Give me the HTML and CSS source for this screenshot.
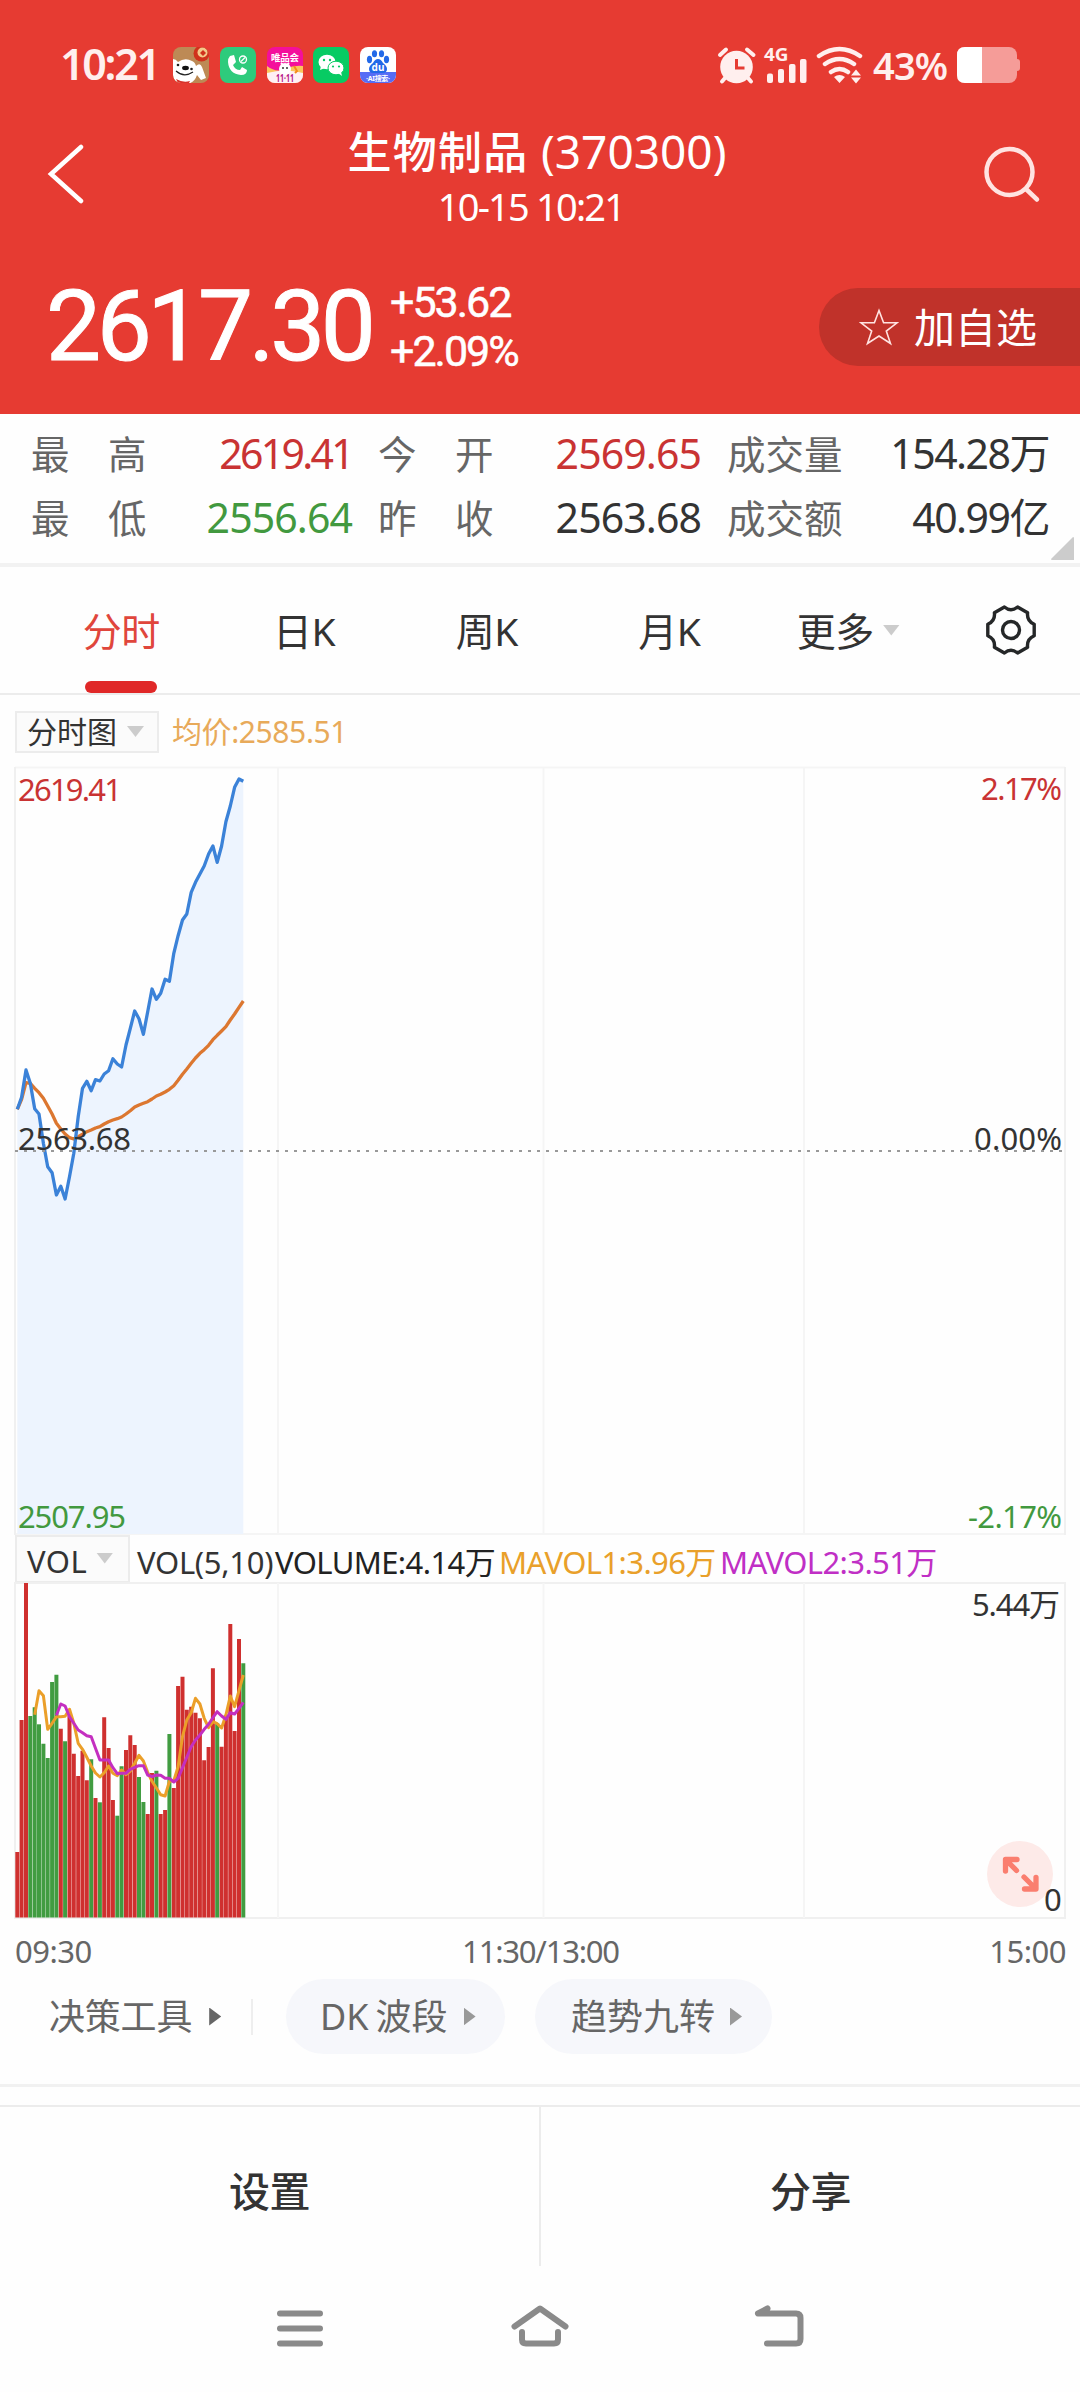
FILE: index.html
```html
<!DOCTYPE html>
<html lang="zh-CN">
<head>
<meta charset="utf-8">
<title>生物制品 (370300)</title>
<link rel="stylesheet" href="styles.css">
</head>
<body>
<header class="top">
  <div class="status">
    <span class="clock">10:21</span>
    <div class="apps">
      <svg class="app" viewBox="0 0 36 36">
        <defs><clipPath id="tile"><rect width="36" height="36" rx="8"/></clipPath></defs>
        <g clip-path="url(#tile)">
          <rect width="36" height="36" fill="#bd8a55"/>
          <path d="M0 12q3 0 5 3q7-5 14-1q3 1 4 5q4-4 6 1l4 11-5 2-4-5q-3 9-12 9Q0 36 0 28z" fill="#fff"/>
          <path d="M3 24q8 7 17 1" fill="none" stroke="#222" stroke-width="1.200"/>
          <circle cx="5" cy="18" r="1.300" fill="#222"/><circle cx="18.500" cy="22" r="1.300" fill="#222"/>
          <ellipse cx="12.500" cy="21" rx="3.400" ry="2.200" fill="#111"/>
          <path d="M3 32q7 4 14 2l-1 2H5z" fill="#d8322a"/>
          <circle cx="28.500" cy="6.500" r="8" fill="#d0321c"/><circle cx="29.500" cy="5.500" r="5" fill="#f4c98a"/>
          <path d="M27 6l3-3 3 3-3 3z" fill="#d0321c"/>
        </g>
      </svg>
      <svg class="app" viewBox="0 0 36 36">
        <rect width="36" height="36" rx="8" fill="#2ecb7c"/>
        <path d="M10 9l4-1 2 7-3 3q2 5 7 5l2-3 5 3q0 5-6 5Q9 27 8 15q0-4 2-6z" fill="#fff"/>
        <circle cx="23" cy="12.500" r="3.500" fill="none" stroke="#fff" stroke-width="1.300"/><path d="M21 14.500l4-4" stroke="#fff" stroke-width="1.200"/>
      </svg>
      <svg class="app" viewBox="0 0 36 36">
        <g clip-path="url(#tile)">
          <rect width="36" height="36" fill="#f40f9c"/>
          <path d="M0 19q9 7 18 3t18-3v17H0z" fill="#fbc45d"/><path d="M0 26q18-5 36 0v10H0z" fill="#fff0f4"/>
          <circle cx="18" cy="22" r="6" fill="#fff"/><circle cx="16" cy="21" r="1" fill="#333"/><circle cx="20" cy="21" r="1" fill="#333"/>
          <path d="M14 16l2 2M22 16l-2 2" stroke="#fff" stroke-width="2"/>
          <path d="M27 19l3 5-2 2" stroke="#f58a1c" stroke-width="2" fill="none"/>
        </g>
        <text class="t-brand" x="18" y="13.500" text-anchor="middle" textLength="28">唯品会</text>
        <text class="t-sale" x="18" y="34.500" text-anchor="middle" textLength="18" lengthAdjust="spacingAndGlyphs">11·11</text>
      </svg>
      <svg class="app" viewBox="0 0 36 36">
        <rect width="36" height="36" rx="8" fill="#07cb63"/>
        <ellipse cx="14" cy="15" rx="8.500" ry="7.300" fill="#fff"/><path d="M8 19l-1 4 5-2z" fill="#fff"/>
        <ellipse cx="23" cy="21" rx="8" ry="6.800" fill="#fff" stroke="#07cb63"/><path d="M25 26l4 3-1-4z" fill="#fff"/>
        <g fill="#07cb63"><circle cx="11" cy="13" r="1.200"/><circle cx="17" cy="13" r="1.200"/><circle cx="20" cy="19.500" r="1.100"/><circle cx="26" cy="19.500" r="1.100"/></g>
      </svg>
      <svg class="app" viewBox="0 0 36 36">
        <g clip-path="url(#tile)"><rect width="36" height="36" fill="#fff"/><path d="M0 25h36v11H0z" fill="#566cf5"/></g>
        <g fill="#2369e8"><ellipse cx="9.500" cy="12.500" rx="2.600" ry="3.700"/><ellipse cx="14.500" cy="6.800" rx="2.600" ry="3.500"/><ellipse cx="21.500" cy="6.800" rx="2.600" ry="3.500"/><ellipse cx="26.500" cy="12.500" rx="2.600" ry="3.700"/>
        <path d="M18 12q3 0 5 4 4 3 4 6 0 4-4.500 4h-9Q9 26 9 22q0-3 4-6 2-4 5-4z"/></g>
        <text class="t-du" x="18" y="24" text-anchor="middle">du</text>
        <text class="t-ai" x="18" y="34" text-anchor="middle" textLength="24">·AI搜索·</text>
      </svg>
    </div>
    <svg class="signals" viewBox="718 45 148 40">
      <g fill="#ffefee" stroke="none">
        <circle cx="737.500" cy="67" r="16.300"/>
        <path d="M721 55l6-5.500M748 49.500l6.500 5.500M726 78l-3 3.500M749 78l3 3.500" stroke="#ffefee" stroke-width="4" stroke-linecap="round"/>
        <path d="M737.500 59v9h8" fill="none" stroke="#e63b32" stroke-width="3"/>
        <rect x="768" y="73.500" width="6" height="9.500" rx="2"/><rect x="779" y="69" width="6" height="14" rx="2"/><rect x="790" y="64" width="6.500" height="19" rx="2"/><rect x="801" y="59" width="6.500" height="24" rx="2"/>
        <path d="M820 56q20.500-14 41 0M826 64q14.500-10 29 0M832 72q8.500-6 17 0" fill="none" stroke="#ffefee" stroke-width="4.500" stroke-linecap="round"/>
        <path d="M835 77q5.500-4 11 0l-5.500 6zM852 75.500l5-6 5 6zM852 77.500l5 6 5-6z"/>
      </g>
      <text class="t-net" x="765" y="61" textLength="24.500" lengthAdjust="spacingAndGlyphs">4G</text>
    </svg>
    <span class="percent">43%</span>
    <svg class="battery" viewBox="0 0 64 36"><rect width="60" height="36" rx="8" fill="#f59c98"/><path d="M60 12q3 0 3 3v6q0 3-3 3z" fill="#f59c98"/><path d="M8 0h17v36H8q-8 0-8-8V8q0-8 8-8z" fill="#fff"/></svg>
  </div>
  <nav class="navbar">
    <svg class="back" viewBox="0 0 54 60"><path d="M43 3L13 30 43 57"/></svg>
    <div class="titles">
      <h1>生物制品 <span class="code">(370300)</span></h1>
      <p>10-15 10:21</p>
    </div>
    <svg class="search" viewBox="0 0 60 60"><circle cx="27.500" cy="27" r="23"/><path d="M44 44l11 10.500"/></svg>
  </nav>
  <div class="quote">
    <strong class="last">2617.30</strong>
    <div class="delta"><span class="chg">+53.62</span><span class="pct">+2.09%</span></div>
    <div class="favorite"><svg viewBox="0 0 40 38"><path d="M20 2.500l4.600 12.300H38L27.300 23 31.500 35.500 20 28 8.500 35.500 12.700 23 2 14.800h13.400z"/></svg><span>加自选</span></div>
  </div>
</header>

<section class="stats">
  <div class="stat"><span>最　高</span><b class="up narrow">2619.41</b></div>
  <div class="stat"><span>今　开</span><b class="up">2569.65</b></div>
  <div class="stat"><span>成交量</span><b class="wide">154.28万</b></div>
  <div class="stat"><span>最　低</span><b class="down">2556.64</b></div>
  <div class="stat"><span>昨　收</span><b>2563.68</b></div>
  <div class="stat"><span>成交额</span><b class="wide">40.99亿</b></div>
  <svg class="corner" viewBox="0 0 23 23"><path d="M22 0q1 0 1 1v22H1q-1 0-1-1z"/></svg>
</section>

<nav class="tabs">
  <div class="tab active">分时</div>
  <div class="tab">日K</div>
  <div class="tab">周K</div>
  <div class="tab">月K</div>
  <div class="tab more">更多<i class="caret"></i></div>
  <svg class="gear" viewBox="-26 -26 52 52"><path d="M6.600-23L16.600-17.200Q15.600-9 23.200-5.700V5.700Q15.600 9 16.600 17.200L6.600 23Q0 17.500-6.600 23L-16.600 17.200Q-15.600 9-23.200 5.700V-5.700Q-15.600-9-16.600-17.200L-6.600-23Q0-17.500 6.600-23z"/><circle r="8.500"/></svg>
</nav>

<section class="toolbar">
  <div class="select kind">分时图<i class="caret"></i></div>
  <span class="average">均价:2585.51</span>
</section>

<svg class="chart price" viewBox="0 0 1080 775">
  <g class="grid"><path d="M15 7.500H1065"/><path d="M15 774H1065" /><path class="side" d="M15 7V775M1065 7V775"/><path d="M278 7V775M543.500 7V775M804 7V775"/></g>
  <g id="price-plot"></g>
  <path class="zero" d="M15 391H1062"/>
  <g class="axis">
    <text class="up" x="18" y="40.500" textLength="104">2619.41</text>
    <text x="18" y="390" textLength="113">2563.68</text>
    <text class="down" x="18" y="768" textLength="108">2507.95</text>
    <text class="up" x="981" y="40" textLength="81">2.17%</text>
    <text x="974" y="390" textLength="88">0.00%</text>
    <text class="down" x="968" y="768" textLength="94">-2.17%</text>
  </g>
</svg>

<section class="legend">
  <div class="select vol">VOL<i class="caret"></i></div>
  <span class="params">VOL(5,10)</span><span class="volume">VOLUME:4.14万</span><span class="ma1">MAVOL1:3.96万</span><span class="ma2">MAVOL2:3.51万</span>
</section>

<svg class="chart" viewBox="0 0 1080 337">
  <g class="grid"><path class="side" d="M15 1H1065V336H15z"/><path d="M278 1V336M543.500 1V336M804 1V336"/></g>
  <g id="volume-plot"></g>
  <circle cx="1020" cy="292" r="33" fill="#fdeae8"/>
  <g class="expand"><path d="M1017 277.500H1005.500V289M1006 278L1016.500 288.500M1036 295.500V307H1024.500M1035.500 306.500L1024 295"/></g>
  <g class="axis">
    <text x="972" y="34" textLength="88">5.44万</text>
    <text x="1044" y="329">0</text>
  </g>
</svg>
<div class="times"><span>09:30</span><span class="noon">11:30/13:00</span><span>15:00</span></div>

<section class="tools">
  <div class="lead">决策工具<i class="play"></i></div>
  <div class="pill">DK<span>波段</span><i class="play"></i></div>
  <div class="pill second"><span>趋势九转</span><i class="play"></i></div>
</section>

<footer class="actions"><div>设置</div><div>分享</div></footer>
<nav class="system">
  <svg viewBox="0 0 60 50"><path d="M10 10.500H50M10 25.500H50M10 40.500H50"/></svg>
  <svg viewBox="0 0 60 50"><path d="M4.500 23.500L30 5.500 55.500 23.500M12 29V36.500Q12 40.500 16 40.500H44Q48 40.500 48 36.500V29"/></svg>
  <svg viewBox="0 0 60 50"><path d="M17.500 5.500L8 10.500H46Q50.500 10.500 50.500 15V36Q50.500 40.500 46 40.500H17"/></svg>
</nav>
<script src="chart.js"></script>
</body>
</html>
```
FILE: styles.css
```css
* { box-sizing: border-box; }
body { margin: 0; width: 1080px; height: 2392px; background: #fefefe; color: #333; font-family: "Noto Sans", "Noto Sans CJK SC", sans-serif; overflow: hidden; }
svg { display: block; flex: none; }
h1, p { margin: 0; font-weight: 400; }

.top { height: 414px; background: #e63b32; color: #fff; }
.status { display: flex; align-items: center; height: 120px; padding: 10px 60px 0 60px; color: #ffefee; }
.clock { width: 113px; font-size: 43px; line-height: 60px; font-weight: 600; letter-spacing: -2.300px; margin-top: -2px; }
.apps { display: flex; gap: 10.800px; }
.app { width: 36px; height: 36px; }
.signals { width: 148px; height: 40px; margin-left: auto; }
.percent { width: 84px; margin-left: 8px; font-size: 38px; font-weight: 600; line-height: 60px; letter-spacing: -.800px; }
.battery { width: 64px; height: 36px; margin-right: -1px; }
.t-brand { font: 700 9.500px "Noto Sans CJK SC", sans-serif; fill: #fff; }
.t-sale { font: 700 10px "Noto Sans", sans-serif; fill: #b5158a; }
.t-du { font: 700 10px "Noto Sans", sans-serif; fill: #fff; }
.t-ai { font: 700 7px "Noto Sans", "Noto Sans CJK SC", sans-serif; fill: #fff; }
.t-net { font: 700 18px "Noto Sans", sans-serif; fill: #ffefee; }

.navbar { display: flex; justify-content: space-between; height: 110px; padding: 0 38px; }
.back, .search { fill: none; stroke: #fff; stroke-width: 4.500px; stroke-linecap: round; }
.back { width: 54px; height: 60px; margin-top: 24px; }
.search { width: 60px; height: 60px; margin-top: 25px; stroke: #ffe3e1; }
.titles { text-align: center; padding-top: 1px; }
.titles h1 { font-size: 44px; line-height: 60px; font-weight: 500; letter-spacing: 1.200px; white-space: nowrap; }
.titles .code { font-size: 46px; font-weight: 400; letter-spacing: 0; }
.titles p { font-size: 38px; line-height: 48px; letter-spacing: -1.800px; margin-left: -12px; }

.quote { display: flex; align-items: center; height: 184px; padding: 10px 0 0 46px; font-family: Roboto, "Noto Sans CJK SC", sans-serif; }
.last { width: 344px; font-size: 98px; line-height: 100px; font-weight: 400; letter-spacing: -4.400px; -webkit-text-stroke: 1px #fff; }
.delta { display: flex; flex-direction: column; font-size: 43px; line-height: 49px; font-weight: 400; letter-spacing: -2px; -webkit-text-stroke: .500px #fff; }
.favorite { display: flex; align-items: center; width: 261px; height: 78px; margin-left: auto; padding-left: 40px; gap: 15px; border-radius: 39px 0 0 39px; background: #c0322a; font-size: 41px; line-height: 60px; }
.favorite span { padding-top: 3px; }
.favorite svg { width: 40px; height: 38px; fill: none; stroke: #ffe3e1; stroke-width: 1.600px; }

.stats { position: relative; display: grid; grid-template-columns: 321px 323px 322px; column-gap: 26px; align-content: start; height: 153px; padding: 7px 0 0 31px; border-bottom: 4px solid #f2f2f2; }
.stat { display: flex; justify-content: space-between; align-items: baseline; height: 64px; line-height: 64px; font-size: 38.500px; color: #666; }
.stat b { font-size: 41px; font-weight: 400; letter-spacing: -.900px; color: #333; }
.stat b.narrow { letter-spacing: -2.700px; }
.stat b.wide { letter-spacing: -1.500px; }
.stat b.up { color: #c93333; }
.stat b.down { color: #42993f; }
.corner { position: absolute; right: 6px; bottom: 3px; width: 23px; height: 23px; fill: #ccc; }

.tabs { display: flex; align-items: center; height: 128px; padding-left: 30px; border-bottom: 2px solid #ececec; font-size: 39px; line-height: 127px; }
.tab { width: 182.700px; text-align: center; letter-spacing: -.500px; }
.tab.active { display: flex; flex-direction: column; align-items: center; height: 126px; color: #e0463c; }
.tab.active::after { content: ""; flex: none; width: 72px; height: 12px; margin-top: -13px; border-radius: 6px; background: #e02828; }
.tab.more { display: flex; align-items: center; width: 224px; padding-left: 36px; gap: 9px; }
.caret { width: 17px; height: 11px; background: #ccc; clip-path: polygon(0 0, 100% 0, 50% 100%); }
.gear { width: 52px; height: 52px; fill: none; stroke: #252728; stroke-width: 3.400px; stroke-linejoin: round; }

.toolbar { display: flex; align-items: center; height: 65px; padding: 8px 0 0 15px; gap: 13px; font-size: 30px; line-height: 40px; }
.select { display: flex; align-items: center; background: #fbfbfb; border: 2px solid #ececec; }
.kind { width: 144px; height: 42px; padding-left: 10px; gap: 10px; }
.average { color: #e8aa5a; letter-spacing: -.400px; }

.chart { width: 1080px; overflow: visible; }
.grid path { fill: none; stroke: #f5f5f5; stroke-width: 2px; }
.grid .side { stroke: #f0f0f0; }
.zero { stroke: #999; stroke-width: 2px; stroke-dasharray: 3 6; }
.axis text { font-size: 31px; fill: #333; }
.axis .up { fill: #c93333; }
.axis .down { fill: #42993f; }
.area { fill: #edf4fe; }
.line { fill: none; stroke-width: 3.300px; stroke-linejoin: round; }
.line.now { stroke: #3b82d8; }
.line.avg { stroke: #dc7730; }
.line.ma5 { stroke: #eb9f29; stroke-width: 3px; }
.line.ma10 { stroke: #c42fc0; stroke-width: 3px; }
.bar { stroke-width: 4px; }
.bar.rise { stroke: #cf302f; }
.bar.fall { stroke: #419c41; }
.expand path { fill: none; stroke: #fa7e6f; stroke-width: 5.300px; stroke-linecap: round; stroke-linejoin: round; }

.legend { display: flex; align-items: center; height: 47px; padding-left: 15px; font-size: 31px; line-height: 46px; white-space: nowrap; }
.legend span { padding-top: 6px; letter-spacing: -.600px; }
.vol { width: 115px; height: 48px; padding: 4px 0 0 10px; gap: 9px; letter-spacing: .500px; }
.vol .caret { margin-top: -5px; }
.legend .params { width: 138px; margin-left: 7px; letter-spacing: -.300px; }
.volume { width: 224px; color: #222; }
.ma1 { width: 221px; color: #e9a02a; }
.ma2 { color: #c02fc5; }

.times { display: flex; justify-content: space-between; height: 60px; padding: 2px 14px 0 15px; font-size: 31px; line-height: 60px; color: #666; letter-spacing: -.500px; }
.noon { letter-spacing: -1.200px; }
.tools { display: flex; align-items: center; height: 108px; padding-bottom: 30px; border-bottom: 3px solid #f1f1f1; font-size: 36px; line-height: 77px; color: #666; }
.lead { display: flex; align-items: center; width: 286px; padding-left: 49px; gap: 17px; letter-spacing: -.200px; }
.lead::after { content: ""; width: 2px; height: 36px; margin-left: 13px; background: #eee; }
.play { width: 12px; height: 18px; background: #666; clip-path: polygon(0 0, 100% 50%, 0 100%); }
.pill { display: flex; align-items: center; width: 219px; height: 75px; padding-left: 34px; border-radius: 38px; background: #f6f7fb; }
.pill span { margin-left: 7px; }
.pill .play { margin-left: 16px; background: #999; }
.pill.second { width: 237px; margin-left: 30px; padding-left: 29px; }
.pill.second .play { margin-left: 15px; }

.actions { display: flex; height: 161px; margin-top: 18px; border-top: 2px solid #ececec; }
.actions div { flex: 1; padding-top: 9px; text-align: center; font-size: 41px; line-height: 151px; font-weight: 500; letter-spacing: -.500px; }
.actions div + div { border-left: 2px solid #ececec; }
.system { display: flex; justify-content: space-between; padding: 37px 270px 0; }
.system svg { width: 60px; height: 50px; fill: none; stroke: #8a8a8a; stroke-width: 6px; stroke-linecap: round; stroke-linejoin: round; }
```
FILE: chart.js
```js
// One sample per minute; values are plot heights in thirds of a pixel.
const STEP = 13.04 / 3;
const FIRST = 17.3;
const price = [1048,1012,930,970,1046,1062,1150,1220,1238,1305,1279,1317,1250,1180,1070,985,964,992,959,963,942,932,896,912,921,855,805,753,776,823,755,687,718,700,658,664,580,527,480,462,397,367,342,318,282,258,307,258,185,138,82,57,64];
const average = [1048,1018,968,970,985,998,1015,1038,1062,1090,1107,1122,1133,1137,1130,1123,1115,1110,1104,1100,1092,1085,1080,1076,1071,1062,1052,1041,1035,1030,1025,1017,1008,1003,996,988,977,961,943,927,910,894,880,869,856,839,826,813,800,780,762,742,723];
const volume = [846,450,39,438,412,463,521,564,336,314,476,514,436,551,618,542,631,568,684,697,442,534,690,737,589,540,496,525,621,696,732,609,602,732,720,492,654,348,320,419,410,428,445,571,531,295,460,530,436,162,483,207,280];
const falling = new Set([3,4,5,6,7,8,9,11,17,19,23,24,28,29,32,35,46,52]);
const ma5 = [434,362,377,478,460,440,440,439,418,460,520,538,562,588,609,621,608,588,610,617,600,614,603,580,556,573,607,634,654,674,678,634,632,590,500,450,428,385,402,445,473,455,461,474,435,378,410,362,315];
const ma10 = [436,402,408,440,460,480,488,497,500,535,570,570,570,593,611,610,610,598,592,587,587,615,620,615,616,625,625,636,625,593,562,530,510,495,478,463,443,425,438,448,428,432,415,397];

const x = i => (FIRST + i * STEP).toFixed(1);
const trace = (values, start, shift) =>
  'M' + values.map((v, i) => `${x(i + start)} ${(v / 3 - shift).toFixed(1)}`).join('L');
const path = (cls, d) => `<path class="${cls}" d="${d}"/>`;

document.getElementById('price-plot').innerHTML =
  path('area', `${trace(price, 0, 0)}V774H${FIRST}z`) +
  path('line avg', trace(average, 0, 0)) +
  path('line now', trace(price, 0, 0));

document.getElementById('volume-plot').innerHTML =
  volume.map((v, i) =>
    path('bar ' + (falling.has(i) ? 'fall' : 'rise'), `M${x(i)} ${(v / 3 - 12).toFixed(1)}V335.500`)).join('') +
  path('line ma5', trace(ma5, 4, 12)) +
  path('line ma10', trace(ma10, 9, 12));
```
